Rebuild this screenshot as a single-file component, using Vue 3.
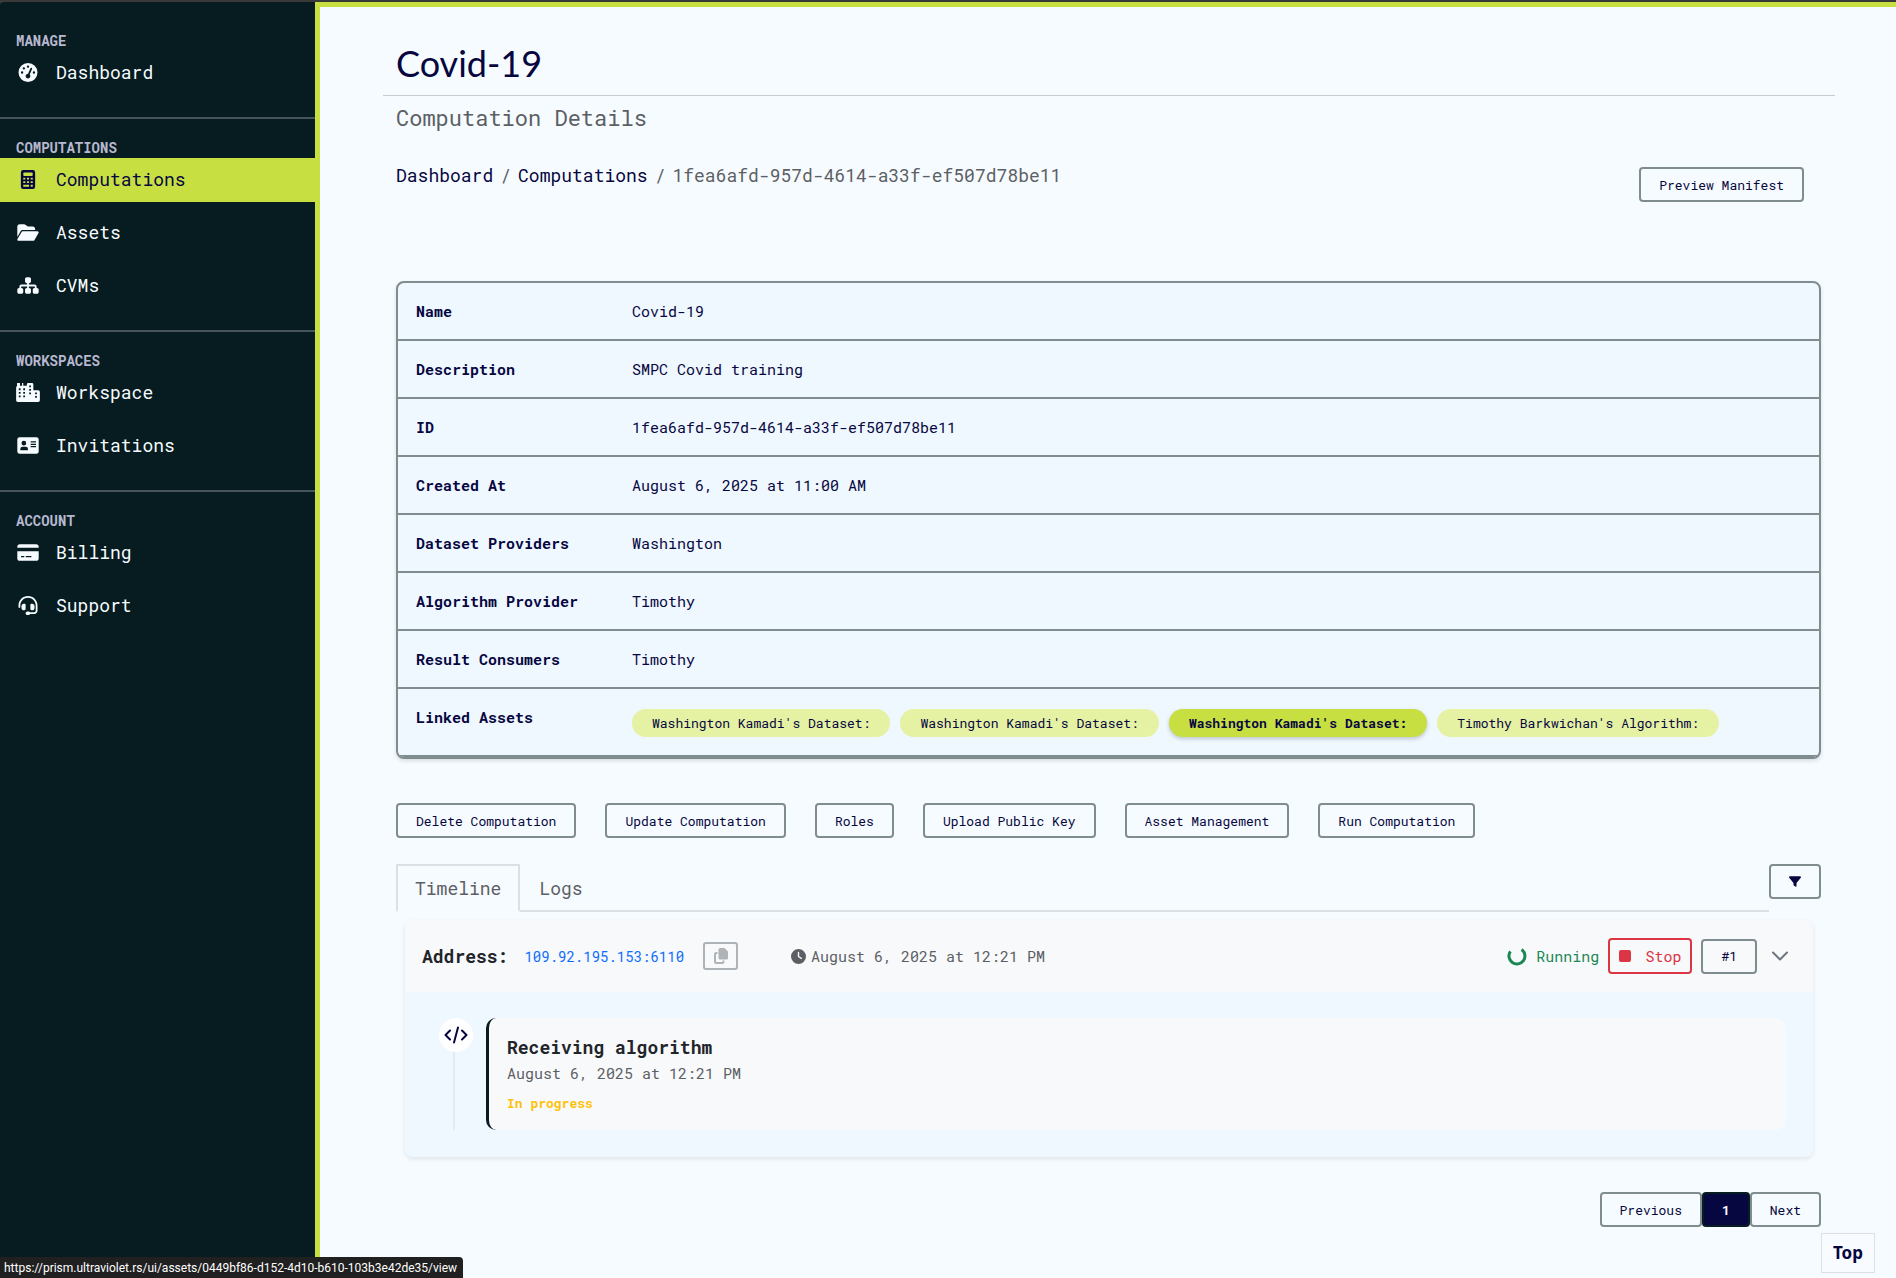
<script setup>
const navSections = [
  { title: 'Manage', items: [{ label: 'Dashboard', icon: 'gauge' }] },
  {
    title: 'Computations',
    items: [
      { label: 'Computations', icon: 'calculator', active: true },
      { label: 'Assets', icon: 'folder' },
      { label: 'CVMs', icon: 'sitemap' },
    ],
  },
  {
    title: 'Workspaces',
    items: [
      { label: 'Workspace', icon: 'city' },
      { label: 'Invitations', icon: 'card' },
    ],
  },
  {
    title: 'Account',
    items: [
      { label: 'Billing', icon: 'credit' },
      { label: 'Support', icon: 'headset' },
    ],
  },
]

const icons = {
  gauge: {
    box: '0 0 512 512',
    d: 'M0 256a256 256 0 1 1 512 0A256 256 0 1 1 0 256zM288 96a32 32 0 1 0 -64 0 32 32 0 1 0 64 0zM256 416c35.3 0 64-28.7 64-64c0-17.4-6.9-33.1-18.1-44.6L366 161.7c5.3-12.1-.2-26.3-12.3-31.6s-26.3 .2-31.6 12.3L257.9 288c-.6 0-1.3 0-1.9 0c-35.3 0-64 28.7-64 64s28.7 64 64 64zM176 144a32 32 0 1 0 -64 0 32 32 0 1 0 64 0zM96 288a32 32 0 1 0 0-64 32 32 0 1 0 0 64zm352-32a32 32 0 1 0 -64 0 32 32 0 1 0 64 0z',
  },
  calculator: {
    box: '0 0 384 512',
    d: 'M64 0h256a64 64 0 0 1 64 64v384a64 64 0 0 1-64 64H64a64 64 0 0 1-64-64V64A64 64 0 0 1 64 0zM96 64a32 32 0 0 0-32 32v32a32 32 0 0 0 32 32h192a32 32 0 0 0 32-32V96a32 32 0 0 0-32-32zM64 208v48h56v-48zM164 208v48h56v-48zM264 208v48h56v-48zM64 304v48h56v-48zM164 304v48h56v-48zM264 304v48h56v-48zM64 400v48h156v-48zM264 400v48h56v-48z',
  },
  folder: {
    box: '0 0 576 512',
    d: 'M88.7 223.8L0 375.8V96C0 60.7 28.7 32 64 32H181.5c17 0 33.3 6.7 45.3 18.7l26.5 26.5c12 12 28.3 18.7 45.3 18.7H416c35.3 0 64 28.7 64 64v32H144c-22.8 0-43.8 12.1-55.3 31.8zm27.6 16.1C122.1 230 132.6 224 144 224H544c11.5 0 22 6.1 27.7 16.1s5.7 22.2-.1 32.1l-112 192C453.9 474 443.4 480 432 480H32c-11.5 0-22-6.1-27.7-16.1s-5.7-22.2 .1-32.1l112-192z',
  },
  sitemap: {
    box: '0 0 576 512',
    d: 'M208 80c0-26.5 21.5-48 48-48l64 0c26.5 0 48 21.5 48 48l0 64c0 26.5-21.5 48-48 48l-8 0 0 40 152 0c30.9 0 56 25.1 56 56l0 32 8 0c26.5 0 48 21.5 48 48l0 64c0 26.5-21.5 48-48 48l-64 0c-26.5 0-48-21.5-48-48l0-64c0-26.5 21.5-48 48-48l8 0 0-32c0-4.4-3.6-8-8-8l-152 0 0 40 8 0c26.5 0 48 21.5 48 48l0 64c0 26.5-21.5 48-48 48l-64 0c-26.5 0-48-21.5-48-48l0-64c0-26.5 21.5-48 48-48l8 0 0-40-152 0c-4.4 0-8 3.6-8 8l0 32 8 0c26.5 0 48 21.5 48 48l0 64c0 26.5-21.5 48-48 48l-64 0c-26.5 0-48-21.5-48-48l0-64c0-26.5 21.5-48 48-48l8 0 0-32c0-30.9 25.1-56 56-56l152 0 0-40-8 0c-26.5 0-48-21.5-48-48l0-64z',
  },
  city: {
    box: '0 0 640 512',
    d: 'M72 0h32v72h56V0h32v72h96V40a40 40 0 0 1 40-40h96a40 40 0 0 1 40 40v152h128a48 48 0 0 1 48 48v224a48 48 0 0 1-48 48H48a48 48 0 0 1-48-48V120a48 48 0 0 1 24-42V0zM72 144v48h48v-48zM192 144v48h48v-48zM72 240v48h48v-48zM192 240v48h48v-48zM72 336v48h48v-48zM192 336v48h48v-48zM352 64v48h48V64zM352 160v48h48v-48zM352 256v48h48v-48zM512 256v48h48v-48zM512 352v48h48v-48z',
  },
  card: {
    box: '0 0 576 512',
    d: 'M64 32h448a64 64 0 0 1 64 64v320a64 64 0 0 1-64 64H64a64 64 0 0 1-64-64V96a64 64 0 0 1 64-64zM176 128a64 64 0 1 0 0 128a64 64 0 1 0 0-128zM144 288a64 64 0 0 0-64 64v16a16 16 0 0 0 16 16h176a16 16 0 0 0 16-16v-16a64 64 0 0 0-64-64zM360 144v32h144v-32zM360 208v32h144v-32zM360 272v32h144v-32z',
  },
  credit: {
    box: '0 0 576 512',
    d: 'M64 32C28.7 32 0 60.7 0 96v32H576V96c0-35.3-28.7-64-64-64H64zM576 224H0V416c0 35.3 28.7 64 64 64H512c35.3 0 64-28.7 64-64V224zM112 352h64c8.8 0 16 7.2 16 16s-7.2 16-16 16H112c-8.8 0-16-7.2-16-16s7.2-16 16-16zm112 16c0-8.8 7.2-16 16-16H368c8.8 0 16 7.2 16 16s-7.2 16-16 16H240c-8.8 0-16-7.2-16-16z',
  },
  headset: {
    box: '0 0 512 512',
    d: 'M256 48C141.1 48 48 141.1 48 256v40c0 13.3-10.7 24-24 24s-24-10.7-24-24V256C0 114.6 114.6 0 256 0S512 114.6 512 256V400.1c0 48.6-39.4 88-88.1 88L313.6 488c-8.3 14.3-23.8 24-41.6 24H240c-26.5 0-48-21.5-48-48s21.5-48 48-48h32c17.8 0 33.3 9.7 41.6 24l110.4 .1c22.1 0 40-17.9 40-40V256c0-114.9-93.1-208-208-208zM144 208h16c17.7 0 32 14.3 32 32V352c0 17.7-14.3 32-32 32H144c-35.3 0-64-28.7-64-64V272c0-35.3 28.7-64 64-64zm224 0c35.3 0 64 28.7 64 64v48c0 35.3-28.7 64-64 64H352c-17.7 0-32-14.3-32-32V240c0-17.7 14.3-32 32-32h16z',
  },
}

const details = [
  ['Name', 'Covid-19'],
  ['Description', 'SMPC Covid training'],
  ['ID', '1fea6afd-957d-4614-a33f-ef507d78be11'],
  ['Created At', 'August 6, 2025 at 11:00 AM'],
  ['Dataset Providers', 'Washington'],
  ['Algorithm Provider', 'Timothy'],
  ['Result Consumers', 'Timothy'],
]

const assets = [
  { label: "Washington Kamadi's Dataset:" },
  { label: "Washington Kamadi's Dataset:" },
  { label: "Washington Kamadi's Dataset:", hovered: true },
  { label: "Timothy Barkwichan's Algorithm:" },
]

const actions = [
  'Delete Computation',
  'Update Computation',
  'Roles',
  'Upload Public Key',
  'Asset Management',
  'Run Computation',
]
</script>

<template>
  <div class="page">
    <aside class="sidebar">
      <nav v-for="section in navSections" :key="section.title" class="nav-section">
        <h2 class="nav-title">{{ section.title }}</h2>
        <ul class="nav-list">
          <li v-for="item in section.items" :key="item.label">
            <a href="#" class="nav-link" :class="{ active: item.active }">
              <svg class="nav-icon" :viewBox="icons[item.icon].box" aria-hidden="true">
                <path fill="currentColor" fill-rule="evenodd" :d="icons[item.icon].d" />
              </svg>
              <span>{{ item.label }}</span>
            </a>
          </li>
        </ul>
      </nav>
    </aside>

    <main class="main">
      <h1 class="title">Covid-19</h1>
      <div class="content">
        <p class="subtitle">Computation Details</p>
        <div class="crumb-row">
          <nav class="breadcrumb" aria-label="Breadcrumb">
            <a href="#">Dashboard</a>
            <span>/</span>
            <a href="#">Computations</a>
            <span>/</span>
            <span>1fea6afd-957d-4614-a33f-ef507d78be11</span>
          </nav>
          <button class="btn" type="button">Preview Manifest</button>
        </div>

        <div class="details">
          <table>
            <tbody>
              <tr v-for="[label, value] in details" :key="label">
                <th scope="row">{{ label }}</th>
                <td>{{ value }}</td>
              </tr>
              <tr class="assets-row">
                <th scope="row">Linked Assets</th>
                <td>
                  <div class="chips">
                    <a
                      v-for="(asset, i) in assets"
                      :key="i"
                      href="#"
                      class="chip"
                      :class="{ hovered: asset.hovered }"
                      >{{ asset.label }}</a
                    >
                  </div>
                </td>
              </tr>
            </tbody>
          </table>
        </div>

        <div class="actions">
          <button v-for="action in actions" :key="action" class="btn" type="button">
            {{ action }}
          </button>
        </div>

        <div class="tab-bar">
          <div class="tabs" role="tablist">
            <button class="tab selected" type="button" role="tab" aria-selected="true">Timeline</button>
            <button class="tab" type="button" role="tab" aria-selected="false">Logs</button>
          </div>
          <button class="btn" type="button" aria-label="Filter">
            <svg class="filter-icon" viewBox="0 0 512 512" aria-hidden="true">
              <path
                fill="currentColor"
                d="M3.9 54.9C10.5 40.9 24.5 32 40 32H472c15.5 0 29.5 8.9 36.1 22.9s4.6 30.5-5.2 42.5L320 320.9V448c0 12.1-6.8 23.2-17.7 28.6s-23.8 4.3-33.5-3l-64-48c-8.1-6-12.8-15.5-12.8-25.6V320.9L9 97.3C-.7 85.4-2.8 68.8 3.9 54.9z"
              />
            </svg>
          </button>
        </div>

        <section class="run">
          <header class="run-head">
            <strong class="run-label">Address:</strong>
            <a class="address" href="#">109.92.195.153:6110</a>
            <button class="copy" type="button" aria-label="Copy address" disabled>
              <svg viewBox="0 0 14 16" aria-hidden="true">
                <path fill="currentColor" d="M6 0h4.500L14 3.500V10a1.500 1.500 0 0 1-1.500 1.500H6A1.500 1.500 0 0 1 4.500 10V1.500A1.500 1.500 0 0 1 6 0z" />
                <path fill="none" stroke="currentColor" stroke-width="2" d="M3.500 5H2.500A1.500 1.500 0 0 0 1 6.500v7A1.500 1.500 0 0 0 2.500 15H8a1.500 1.500 0 0 0 1.500-1.500V12.500" />
              </svg>
            </button>
            <span class="time">
              <svg viewBox="0 0 512 512" aria-hidden="true">
                <path
                  fill="currentColor"
                  fill-rule="evenodd"
                  d="M256 0a256 256 0 1 1 0 512A256 256 0 1 1 256 0zM232 120V256c0 8 4 15.500 10.700 20l96 64c11 7.400 25.900 4.400 33.300-6.700s4.400-25.900-6.700-33.300L280 243.200V120c0-13.300-10.700-24-24-24s-24 10.700-24 24z"
                />
              </svg>
              August 6, 2025 at 12:21 PM
            </span>
            <div class="run-controls">
              <span class="running">
                <svg viewBox="0 0 20 20" aria-hidden="true">
                  <path fill="none" stroke="currentColor" stroke-width="3" d="M3.400 5.400A8 8 0 1 0 14.600 3.500" />
                </svg>
                Running
              </span>
              <button class="stop" type="button"><i class="stop-square"></i>Stop</button>
              <button class="btn" type="button">#1</button>
              <button class="toggle" type="button" aria-label="Collapse">
                <svg viewBox="0 0 18 10" aria-hidden="true">
                  <path fill="none" stroke="currentColor" stroke-width="2" stroke-linecap="round" stroke-linejoin="round" d="M2 1.500l7 7 7-7" />
                </svg>
              </button>
            </div>
          </header>
          <div class="run-body">
            <div class="rail">
              <span class="rail-dot">
                <svg viewBox="0 0 24 18" aria-hidden="true">
                  <path fill="none" stroke="currentColor" stroke-width="2" stroke-linecap="round" stroke-linejoin="round" d="M6 4.500L1.500 9 6 13.500M18 4.500L22.500 9 18 13.500M14 1.500L10 16.500" />
                </svg>
              </span>
            </div>
            <article class="event">
              <h3>Receiving algorithm</h3>
              <p class="event-time">August 6, 2025 at 12:21 PM</p>
              <p class="event-state">In progress</p>
            </article>
          </div>
        </section>

        <nav class="pagination" aria-label="Pages">
          <button class="btn" type="button">Previous</button>
          <button class="btn current" type="button" aria-current="page">1</button>
          <button class="btn" type="button">Next</button>
        </nav>
      </div>
    </main>

    <a class="top-link" href="#">Top</a>
    <div class="status">https://prism.ultraviolet.rs/ui/assets/0449bf86-d152-4d10-b610-103b3e42de35/view</div>
  </div>
</template>

<style>
body {
  margin: 0;
  background: #3a3a3a;
}
</style>

<style scoped>
.page {
  --lime: #c7df41;
  --navy: #060640;
  --ink: #071c20;
  --line: #7f8c90;
  --muted: #5c6064;
  display: flex;
  box-sizing: border-box;
  min-height: 100vh;
  padding-top: 2px;
  font-family: 'Roboto Mono', 'DejaVu Sans Mono', monospace;
  font-size: 18px;
  color: var(--navy);
}
.page * {
  box-sizing: border-box;
}
a {
  color: inherit;
  text-decoration: none;
}
button {
  font-family: inherit;
}
h1, h2, h3, p, ul {
  margin: 0;
  padding: 0;
}
svg {
  display: block;
}

.sidebar {
  flex: 0 0 320px;
  padding-top: 10px;
  background: var(--ink);
  border-right: 5px solid var(--lime);
  border-top-left-radius: 4px;
  color: #f6fbff;
}
.nav-section {
  padding: 19px 0 22px;
}
.nav-section + .nav-section {
  border-top: 2px solid #47545a;
}
.nav-title {
  padding-left: 16px;
  font-size: 14px;
  line-height: 20px;
  text-transform: uppercase;
  color: #b8b8d0;
}
.nav-list {
  display: flex;
  flex-direction: column;
  gap: 9px;
  list-style: none;
}
.nav-link {
  display: flex;
  align-items: center;
  gap: 16px;
  height: 44px;
  padding: 0 0 2px 16px;
}
.nav-link.active {
  background: var(--lime);
  color: var(--navy);
}
.nav-icon {
  width: 24px;
  height: 19px;
}

.main {
  flex: 1;
  min-width: 0;
  padding: 0 61px 32px 63px;
  background: #f6fbff;
  border-top: 5px solid var(--lime);
}
.title {
  padding: 35px 13px 11px;
  border-bottom: 1px solid #c6cbcf;
  font-family: Lato, sans-serif;
  font-size: 36px;
  font-weight: 400;
  line-height: 42px;
}
.content {
  padding: 6px 14px 0 13px;
}
.subtitle {
  font-size: 22px;
  line-height: 32px;
  color: var(--muted);
}
.crumb-row {
  display: flex;
  justify-content: space-between;
  align-items: flex-end;
  margin-top: 28px;
  padding-right: 17px;
  height: 40px;
}
.breadcrumb {
  display: flex;
  align-self: flex-start;
  gap: 7px;
  line-height: 26px;
  color: var(--muted);
}
.breadcrumb a {
  color: var(--navy);
}
.btn {
  height: 35px;
  padding: 0 18px;
  background: transparent;
  border: 2px solid var(--line);
  border-radius: 4px;
  font-size: 13px;
  color: var(--navy);
}

.details {
  margin-top: 79px;
  overflow: hidden;
  background: #eff7ff;
  border: 2px solid var(--line);
  border-radius: 8px;
  box-shadow: 0 2px 4px rgba(0, 0, 0, 0.12);
  font-size: 15px;
}
table {
  width: 100%;
  border-collapse: separate;
  border-spacing: 0;
}
th, td {
  height: 58px;
  padding: 16px 18px;
  border-bottom: 2px solid var(--line);
  line-height: 24px;
  text-align: left;
  vertical-align: top;
}
th {
  width: 216px;
}
.assets-row th, .assets-row td {
  height: 68px;
}
.assets-row td {
  padding-top: 20px;
  padding-bottom: 0;
}
.chips {
  display: flex;
  gap: 10px;
}
.chip {
  height: 28px;
  padding: 0 20px;
  background: #e5f1a3;
  border-radius: 16px;
  font-size: 13px;
  line-height: 28px;
  white-space: nowrap;
}
.chip.hovered {
  background: var(--lime);
  box-shadow: 0 2px 4px rgba(0, 0, 0, 0.2);
  font-weight: 700;
}

.actions {
  display: flex;
  gap: 29px;
  margin-top: 44px;
}

.tab-bar {
  display: flex;
  align-items: flex-start;
  margin-top: 26px;
}
.tabs {
  display: flex;
  flex: 1;
  height: 48px;
  border-bottom: 2px solid #dcdfe4;
}
.tab {
  height: 48px;
  padding: 0 17px;
  background: transparent;
  border: 2px solid transparent;
  font-size: 18px;
  color: var(--muted);
}
.tab.selected {
  background: #f6fbff;
  border-color: #dcdfe4;
  border-bottom-color: #f6fbff;
}
.filter-icon {
  width: 12px;
  height: 13px;
}

.run {
  margin: 8px 8px 0 9px;
  overflow: hidden;
  background: #eff7ff;
  border-radius: 8px;
  box-shadow: 0 2px 5px rgba(0, 0, 0, 0.09);
}
.run-head {
  display: flex;
  align-items: center;
  height: 72px;
  padding: 0 24px 0 17px;
  background: #f8f9fb;
  font-size: 15px;
}
.run-label {
  font-size: 18px;
  color: #212529;
}
.address {
  margin-left: 16px;
  font-size: 14px;
  color: #0d6efd;
}
.copy {
  display: grid;
  place-items: center;
  width: 35px;
  height: 28px;
  margin-left: 19px;
  padding: 0;
  background: transparent;
  border: 2px solid #adb3b7;
  border-radius: 3px;
  color: #adb3b7;
}
.copy svg {
  width: 14px;
  height: 16px;
}
.time {
  display: flex;
  align-items: center;
  gap: 5px;
  margin-left: 53px;
  color: var(--muted);
}
.time svg {
  width: 15px;
  height: 15px;
}
.run-controls {
  display: flex;
  align-items: center;
  gap: 9px;
  margin-left: auto;
}
.running {
  display: flex;
  align-items: center;
  gap: 9px;
  color: #198754;
}
.running svg {
  width: 20px;
  height: 20px;
}
.stop {
  display: flex;
  align-items: center;
  gap: 14px;
  height: 36px;
  padding: 0 9px;
  background: transparent;
  border: 2px solid #dc3545;
  border-radius: 4px;
  font-size: 15px;
  color: #dc3545;
}
.stop-square {
  width: 12px;
  height: 12px;
  background: currentColor;
  border-radius: 2px;
}
.toggle {
  margin-left: 5px;
  padding: 0;
  background: none;
  border: 0;
  color: #6c757d;
}
.toggle svg {
  width: 18px;
  height: 10px;
}
.run-body {
  display: flex;
  gap: 13px;
  padding: 26px 27px 27px 34px;
}
.rail {
  flex: 0 0 34px;
  background: linear-gradient(#e2eaf2, #e2eaf2) 14px 0 / 2px 100% no-repeat;
}
.rail-dot {
  display: grid;
  place-items: center;
  height: 34px;
  background: #fff;
  border-radius: 50%;
}
.rail-dot svg {
  width: 24px;
  height: 18px;
}
.event {
  flex: 1;
  height: 112px;
  padding: 16px 18px;
  background: #f8f9fb;
  border-left: 3px solid var(--ink);
  border-radius: 10px;
}
.event h3 {
  font-size: 18px;
  line-height: 26px;
  color: #212529;
}
.event-time {
  font-size: 15px;
  line-height: 26px;
  color: var(--muted);
}
.event-state {
  margin-top: 7px;
  font-size: 13px;
  font-weight: 700;
  line-height: 20px;
  color: #ffc107;
}

.pagination {
  display: flex;
  justify-content: flex-end;
  margin-top: 35px;
}
.btn.current {
  background: var(--navy);
  border-color: var(--ink);
  font-weight: 700;
  color: #f6fbff;
}

.top-link {
  position: fixed;
  right: 21px;
  bottom: 5px;
  padding: 0 11px;
  background: #f8fbff;
  border: 1px solid #dcdfe6;
  font: 700 17px/38px 'Noto Sans', sans-serif;
}
.status {
  position: fixed;
  left: 0;
  bottom: 0;
  height: 21px;
  padding: 0 6px 0 4px;
  background: #202020;
  border-top-right-radius: 4px;
  font: 12px/22px Roboto, sans-serif;
  color: #fff;
}
</style>
